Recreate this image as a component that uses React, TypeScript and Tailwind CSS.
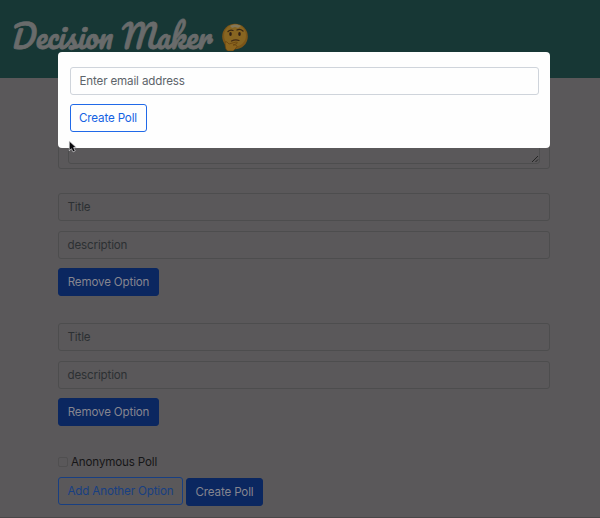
import type { ReactNode } from 'react';

const solid = 'bg-[#0b2760] border-[#0b2760] text-[#85858f]';

function Button({ children, className }: { children: ReactNode; className: string }) {
  return (
    <button className={`flex h-7 items-center justify-center rounded-[3px] border whitespace-nowrap ${className}`}>
      {children}
    </button>
  );
}

function Field({ label }: { label: string }) {
  return (
    <div className="flex h-7 w-full items-center rounded-[3px] border border-[#4d4d4e] pl-[8.500px] text-[#2c3033]">
      {label}
    </div>
  );
}

function Option() {
  return (
    <section className="flex flex-col items-start">
      <Field label="Title" />
      <div className="mt-[10px] w-full"><Field label="description" /></div>
      <Button className={`mt-[9px] w-[101px] ${solid}`}>Remove Option</Button>
    </section>
  );
}

function ThinkingFace() {
  return (
    <svg className="mt-[23px] ml-[11px] h-7 w-7 shrink-0" viewBox="0 0 28 28">
      <circle cx="14" cy="13.5" r="12.8" fill="#7b5518" />
      <circle cx="14" cy="12.5" r="11" fill="#876521" />
      <path d="M9 3c3-2 8-2 11 0l-3 2-3-1-3 1z" fill="#83775a" />
      <path d="M7 8.5q2-2 5-1M16 7q3-1.500 6 1" fill="none" stroke="#392713" strokeWidth="1.300" strokeLinecap="round" />
      <ellipse cx="9.500" cy="11" rx="1.300" ry="1.900" fill="#302015" />
      <ellipse cx="18.500" cy="11" rx="1.300" ry="1.900" fill="#302015" />
      <path d="M10.500 18q4-2 7.500-.5" fill="none" stroke="#432b14" strokeWidth="1.200" strokeLinecap="round" />
      <path d="M4 20q0-2 2-1l2 2 7-2q2 0 1 1.500L12 22h3q2 1 0 3l-3 3H7q-3-1-3-8z" fill="#8b651e" stroke="#65400f" strokeWidth=".7" />
    </svg>
  );
}

export default function App() {
  return (
    <main className="relative h-[518px] w-[600px] overflow-hidden border-b border-[#484748] bg-[#5a585a] font-['Inter','Liberation_Sans',sans-serif] text-[11.600px] leading-4 tracking-[-0.15px]">
      <header className="flex h-[78px] items-start bg-[#173735]">
        <h1 className="mt-[17px] ml-[10px] w-[200px] origin-bottom-left scale-x-[0.92] -skew-x-[7deg] font-['Pacifico','Lato',cursive] text-[32px] leading-9 font-normal tracking-normal whitespace-nowrap text-[#696b6b] [-webkit-text-stroke:0.7px_#696b6b]">Decision Maker</h1>
        <ThinkingFace />
      </header>
      <div className="ml-[58px] flex w-[492px] flex-col">
        <div className="flex h-[91px] items-end rounded-[3px] border border-[#4d4d4e] px-[9px] pb-1">
          <div className="flex h-16 w-full items-end justify-end rounded-[3px] border border-[#4d4d4e]">
            <svg className="h-[7px] w-[7px]" viewBox="0 0 7 7"><path d="M0 6L6 0M3.500 6L6 3.500" stroke="#252525" fill="none" /></svg>
          </div>
        </div>
        <div className="mt-6 flex flex-col gap-[27px]"><Option /><Option /></div>
        <label className="mt-[28px] flex h-4 items-center gap-[3px] text-[#161617]">
          <span className="h-[10px] w-[10px] rounded-[2px] border border-[#504f50]" />
          Anonymous Poll
        </label>
        <div className="mt-[7px] flex items-start gap-[3px]">
          <Button className="w-[125px] border-[#183f82] text-[#183f82]">Add Another Option</Button>
          <Button className={`mt-px w-[77px] ${solid}`}>Create Poll</Button>
        </div>
      </div>
      <section className="absolute top-[52px] left-[58px] h-[96px] w-[492px] rounded-[4px] bg-[#fefefe] px-[11.500px] pt-[15px]">
        <div className="flex h-7 items-center rounded-[3px] border border-[#cfd4db] pl-[9px] text-[#5d646a]">Enter email address</div>
        <Button className="mt-[9px] w-[77px] border-[#2069e8] text-[#1462e3]">Create Poll</Button>
      </section>
      <svg className="absolute top-[140px] left-[68px] h-[13px] w-[9px]" viewBox="0 0 8 12">
        <path d="M1 1v9l2-2 1.500 3 2-1L5 7h2.500z" fill="#08080b" stroke="#e7e7e9" strokeWidth=".6" />
      </svg>
    </main>
  );
}
